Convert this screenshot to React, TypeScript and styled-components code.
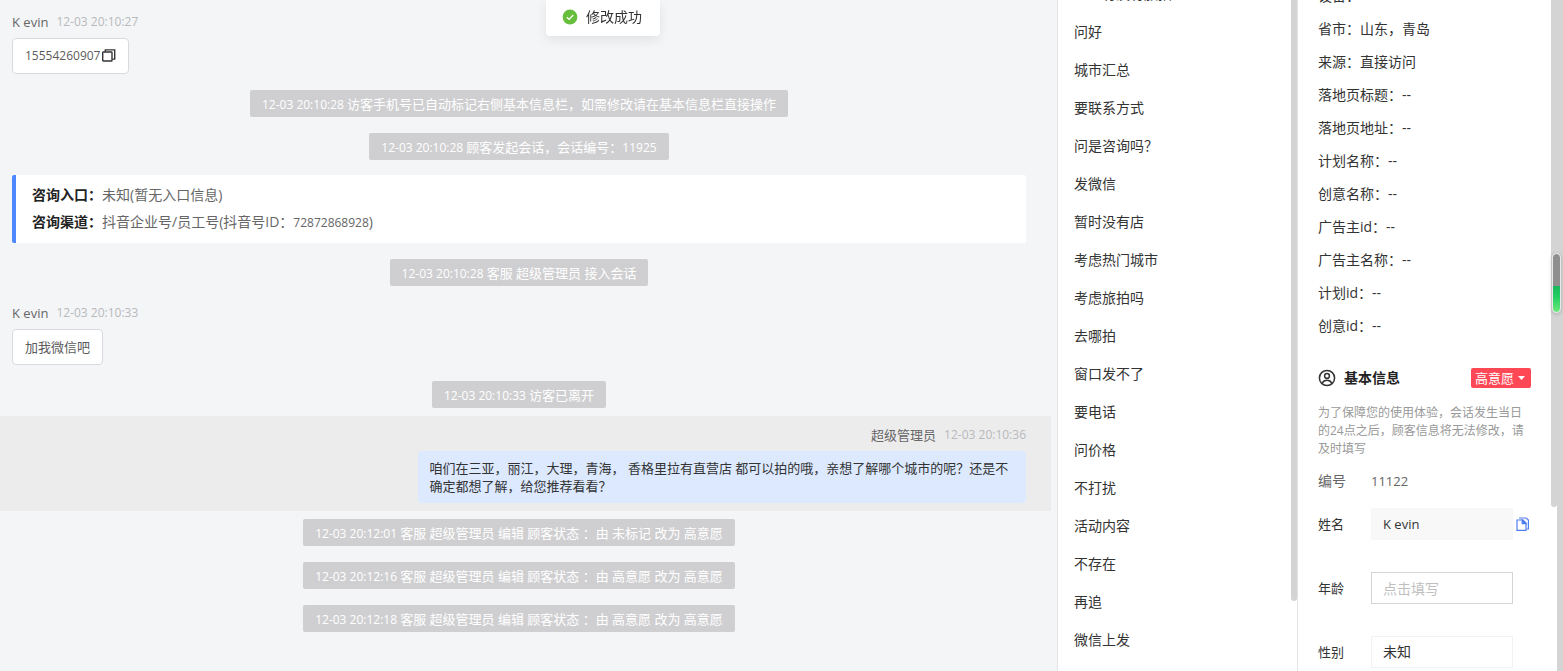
import React from "react";
import styled, { createGlobalStyle } from "styled-components";

const GlobalStyle = createGlobalStyle`
  *, *::before, *::after { box-sizing: border-box; }
  body {
    margin: 0;
    font-family: "Open Sans", "Noto Sans CJK SC", sans-serif;
    font-size: 14px;
    line-height: 22px;
    color: #333;
    background: #f4f5f7;
  }
  button, input, select { font: inherit; color: inherit; margin: 0; }
  p, h2, ul, dl, dd { margin: 0; padding: 0; }
`;

const Page = styled.div`
  display: flex;
  height: 100vh;
  overflow: hidden;
`;

/* ---------- conversation ---------- */

const Chat = styled.main`
  flex: 1;
  min-width: 0;
  padding: 3px 6px 0 0;
  font-size: 13px;
  line-height: 18px;
  overflow: hidden;
`;

const Message = styled.article<{ $own?: boolean }>`
  display: flex;
  flex-direction: column;
  align-items: ${(p) => (p.$own ? "flex-end" : "flex-start")};
  padding: 8px 25px 8px 12px;
  background: ${(p) => (p.$own ? "#ececed" : "transparent")};
`;

const Sender = styled.header`
  display: flex;
  gap: 8px;
  margin-bottom: 5px;
  line-height: 22px;
  color: #666;
`;

const Time = styled.time`
  font-size: 12px;
  color: #b8b9bc;
`;

const Bubble = styled.div<{ $own?: boolean }>`
  display: flex;
  align-items: center;
  gap: 2px;
  max-width: 60%;
  padding: 8px 12px;
  border: ${(p) => (p.$own ? "0" : "1px solid #d8dadf")};
  border-radius: 4px;
  color: ${(p) => (p.$own ? "#333" : "#5c5c5c")};
  background: ${(p) => (p.$own ? "#dce9ff" : "#fff")};
`;

const Small = styled.span`
  font-size: 12px;
`;

const IconButton = styled.button`
  display: flex;
  padding: 0;
  border: 0;
  background: none;
  cursor: pointer;
`;

const NoticeRow = styled.div`
  display: flex;
  justify-content: center;
  padding: 8px 25px 8px 12px;
`;

const NoticePill = styled.p`
  padding: 2px 12px 0;
  border-radius: 2px;
  line-height: 25px;
  color: #fff;
  background: #cfcfd1;
  white-space: nowrap;
`;

const EntryCard = styled.section`
  margin: 7px 25px 8px 12px;
  padding: 6px 16px 7px;
  border-left: 4px solid #4d88ff;
  border-radius: 2px;
  font-size: 14px;
  line-height: 27px;
  color: #666;
  background: #fff;

  b { color: #222; }
`;

/* ---------- quick replies ---------- */

const SidePanel = styled.aside<{ $width: number }>`
  display: flex;
  flex: 0 0 ${(p) => p.$width}px;
  border-left: 1px solid #e3e4e6;
  background: #fff;
  overflow: hidden;
`;

const ReplyList = styled.ul`
  flex: 1;
  margin-top: -25px;
  list-style: none;
`;

const ReplyItem = styled.li`
  padding: 0 16px;
  line-height: 38px;
  cursor: pointer;
`;

const Scrollbar = styled.div`
  flex: 0 0 6px;
`;

const Thumb = styled.div<{ $size: number }>`
  height: ${(p) => p.$size}%;
  border-radius: 0 0 3px 3px;
  background: #d4d4d4;
`;

/* ---------- visitor details ---------- */

const Details = styled.div`
  flex: 1;
  min-width: 0;
  margin-top: -21px;
  padding: 0 20px;
`;

const Fact = styled.div`
  display: flex;
  line-height: 33px;
`;

const SectionHead = styled.div`
  display: flex;
  align-items: center;
  gap: 8px;
  margin-top: 25px;
`;

const SectionTitle = styled.h2`
  flex: 1;
  font-size: 14px;
  line-height: 22px;
  color: #222;
`;

const StatusButton = styled.button`
  display: flex;
  align-items: center;
  gap: 4px;
  height: 20px;
  padding: 0 6px 0 4px;
  border: 0;
  border-radius: 2px;
  font-size: 13px;
  line-height: 20px;
  color: #fff;
  background: #ff4855;
`;

const Hint = styled.p`
  margin: 15px 0 12px;
  font-size: 12px;
  line-height: 18px;
  color: #999;
`;

const NumberRow = styled.div`
  display: flex;
  margin-bottom: 16px;
  color: #666;
`;

const NumberLabel = styled.span`
  flex: 0 0 53px;
`;

const NumberValue = styled.span`
  font-size: 13px;
`;

const Field = styled.div`
  display: flex;
  align-items: center;
  margin-bottom: 32px;
`;

const FieldLabel = styled.label`
  flex: 0 0 53px;
  font-size: 13px;
`;

const TextBox = styled.input<{ $quiet?: boolean }>`
  width: 142px;
  height: 32px;
  margin-right: 2px;
  padding: 0 11px;
  border: 1px solid ${(p) => (p.$quiet ? "#f7f7f7" : "#d5d5d5")};
  border-radius: 0;
  font-size: ${(p) => (p.$quiet ? "13px" : "14px")};
  background: ${(p) => (p.$quiet ? "#f8f8f9" : "#fff")};
  outline: none;

  &::placeholder { color: #bfbfbf; opacity: 1; }
`;

const Picker = styled.select`
  width: 142px;
  height: 32px;
  padding: 0 11px;
  border: 1px solid #f2f2f2;
  border-radius: 0;
  background: #fff;
  appearance: none;
  outline: none;
`;

const PageScrollbar = styled.div`
  position: relative;
  flex: 0 0 6px;
  background: #d4d4d4;
`;

const Meter = styled.div`
  position: absolute;
  top: 253px;
  right: 2px;
  width: 9px;
  height: 60px;
  border: 1px solid #e9e9e9;
  border-radius: 5px;
  background: linear-gradient(#8f8f8f 0 56%, #18b85c 56%, #25cf63 75%, #6de87c 100%);
  box-shadow: 0 1px 4px rgba(0, 0, 0, 0.2);
`;

const Toast = styled.div`
  position: fixed;
  top: 0;
  left: 546px;
  display: flex;
  align-items: center;
  gap: 8px;
  height: 36px;
  padding: 0 18px 2px 16px;
  border-radius: 0 0 4px 4px;
  background: #fff;
  box-shadow: 0 4px 12px rgba(0, 0, 0, 0.08);
`;

const CopyIcon = () => (
  <svg width="14" height="16" viewBox="0 0 14 16" fill="none" stroke="#333" strokeWidth="1.4" aria-hidden="true">
    <rect x="0.7" y="4" width="9.3" height="9" rx="0.6" />
    <path d="M3.3 3.7V1.9h9.4v9.2h-2.4" />
  </svg>
);

const PagesIcon = () => (
  <svg width="15" height="16" viewBox="0 0 15 16" fill="none" stroke="#4f7cf0" strokeWidth="1.2" aria-hidden="true">
    <path d="M2 4h6l3 3v7.4H2z" />
    <path d="M7.2 4v3.6H11z" fill="#4f7cf0" />
    <path d="M4 2h7.2l2.2 2v9h-1.9" />
  </svg>
);

const UserIcon = () => (
  <svg width="18" height="18" viewBox="0 0 18 18" fill="none" stroke="#333" strokeWidth="1.5" aria-hidden="true">
    <circle cx="9" cy="9" r="7.6" />
    <circle cx="9" cy="6.9" r="2.4" />
    <path d="M4.2 14.3c.9-2 2.6-3 4.8-3s3.9 1 4.8 3" />
  </svg>
);

const SuccessIcon = () => (
  <svg width="16" height="16" viewBox="0 0 16 16" aria-hidden="true">
    <circle cx="8" cy="8" r="7.4" fill="#67bd3c" />
    <path d="M4.8 8.2l2.3 2.2 4.1-4.4" fill="none" stroke="#fff" strokeWidth="1.3" />
  </svg>
);

const CaretIcon = () => (
  <svg width="7" height="4" viewBox="0 0 7 4" aria-hidden="true">
    <path d="M0 0h7L3.5 4z" fill="#fff" />
  </svg>
);

const Notice = ({ time, children }: { time: string; children: React.ReactNode }) => (
  <NoticeRow>
    <NoticePill>
      <Small>{time} </Small>
      {children}
    </NoticePill>
  </NoticeRow>
);

const replies = [
  "三亚有没有旅拍", "问好", "城市汇总", "要联系方式", "问是咨询吗？", "发微信", "暂时没有店",
  "考虑热门城市", "考虑旅拍吗", "去哪拍", "窗口发不了", "要电话", "问价格", "不打扰",
  "活动内容", "不存在", "再追", "微信上发",
];

const facts: [string, string][] = [
  ["设备", "--"],
  ["省市", "山东，青岛"],
  ["来源", "直接访问"],
  ["落地页标题", "--"],
  ["落地页地址", "--"],
  ["计划名称", "--"],
  ["创意名称", "--"],
  ["广告主id", "--"],
  ["广告主名称", "--"],
  ["计划id", "--"],
  ["创意id", "--"],
];

export default function App() {
  return (
    <>
      <GlobalStyle />
      <Page lang="zh-CN">
        <Chat>
          <Message>
            <Sender>
              <span>K evin</span>
              <Time>12-03 20:10:27</Time>
            </Sender>
            <Bubble>
              <Small>15554260907</Small>
              <IconButton aria-label="复制">
                <CopyIcon />
              </IconButton>
            </Bubble>
          </Message>
          <Notice time="12-03 20:10:28">访客手机号已自动标记右侧基本信息栏，如需修改请在基本信息栏直接操作</Notice>
          <Notice time="12-03 20:10:28">
            顾客发起会话，会话编号：<Small>11925</Small>
          </Notice>
          <EntryCard>
            <p><b>咨询入口：</b>未知(暂无入口信息)</p>
            <p><b>咨询渠道：</b>抖音企业号/员工号(抖音号ID：<Small>72872868928</Small>)</p>
          </EntryCard>
          <Notice time="12-03 20:10:28">客服 超级管理员 接入会话</Notice>
          <Message>
            <Sender>
              <span>K evin</span>
              <Time>12-03 20:10:33</Time>
            </Sender>
            <Bubble>加我微信吧</Bubble>
          </Message>
          <Notice time="12-03 20:10:33">访客已离开</Notice>
          <Message $own>
            <Sender>
              <span>超级管理员</span>
              <Time>12-03 20:10:36</Time>
            </Sender>
            <Bubble $own>
              咱们在三亚，丽江，大理，青海， 香格里拉有直营店 都可以拍的哦，亲想了解哪个城市的呢？还是不确定都想了解，给您推荐看看？
            </Bubble>
          </Message>
          <Notice time="12-03 20:12:01">客服 超级管理员 编辑 顾客状态 ：由 未标记 改为 高意愿</Notice>
          <Notice time="12-03 20:12:16">客服 超级管理员 编辑 顾客状态 ：由 高意愿 改为 高意愿</Notice>
          <Notice time="12-03 20:12:18">客服 超级管理员 编辑 顾客状态 ：由 高意愿 改为 高意愿</Notice>
        </Chat>

        <SidePanel $width={240}>
          <ReplyList>
            {replies.map((text) => (
              <ReplyItem key={text}>{text}</ReplyItem>
            ))}
          </ReplyList>
          <Scrollbar>
            <Thumb $size={89.6} />
          </Scrollbar>
        </SidePanel>

        <SidePanel $width={260}>
          <Details>
            <dl>
              {facts.map(([label, value]) => (
                <Fact key={label}>
                  <dt>{label}：</dt>
                  <dd>{value}</dd>
                </Fact>
              ))}
            </dl>
            <SectionHead>
              <UserIcon />
              <SectionTitle>基本信息</SectionTitle>
              <StatusButton>
                高意愿
                <CaretIcon />
              </StatusButton>
            </SectionHead>
            <Hint>为了保障您的使用体验，会话发生当日的24点之后，顾客信息将无法修改，请及时填写</Hint>
            <NumberRow>
              <NumberLabel>编号</NumberLabel>
              <NumberValue>11122</NumberValue>
            </NumberRow>
            <Field>
              <FieldLabel htmlFor="name">姓名</FieldLabel>
              <TextBox id="name" $quiet defaultValue="K evin" />
              <IconButton aria-label="复制姓名">
                <PagesIcon />
              </IconButton>
            </Field>
            <Field>
              <FieldLabel htmlFor="age">年龄</FieldLabel>
              <TextBox id="age" placeholder="点击填写" />
            </Field>
            <Field>
              <FieldLabel htmlFor="gender">性别</FieldLabel>
              <Picker id="gender" defaultValue="未知">
                <option>未知</option>
                <option>男</option>
                <option>女</option>
              </Picker>
            </Field>
          </Details>
          <Scrollbar>
            <Thumb $size={75.5} />
          </Scrollbar>
        </SidePanel>

        <PageScrollbar>
          <Meter />
        </PageScrollbar>
      </Page>
      <Toast role="status">
        <SuccessIcon />
        修改成功
      </Toast>
    </>
  );
}
